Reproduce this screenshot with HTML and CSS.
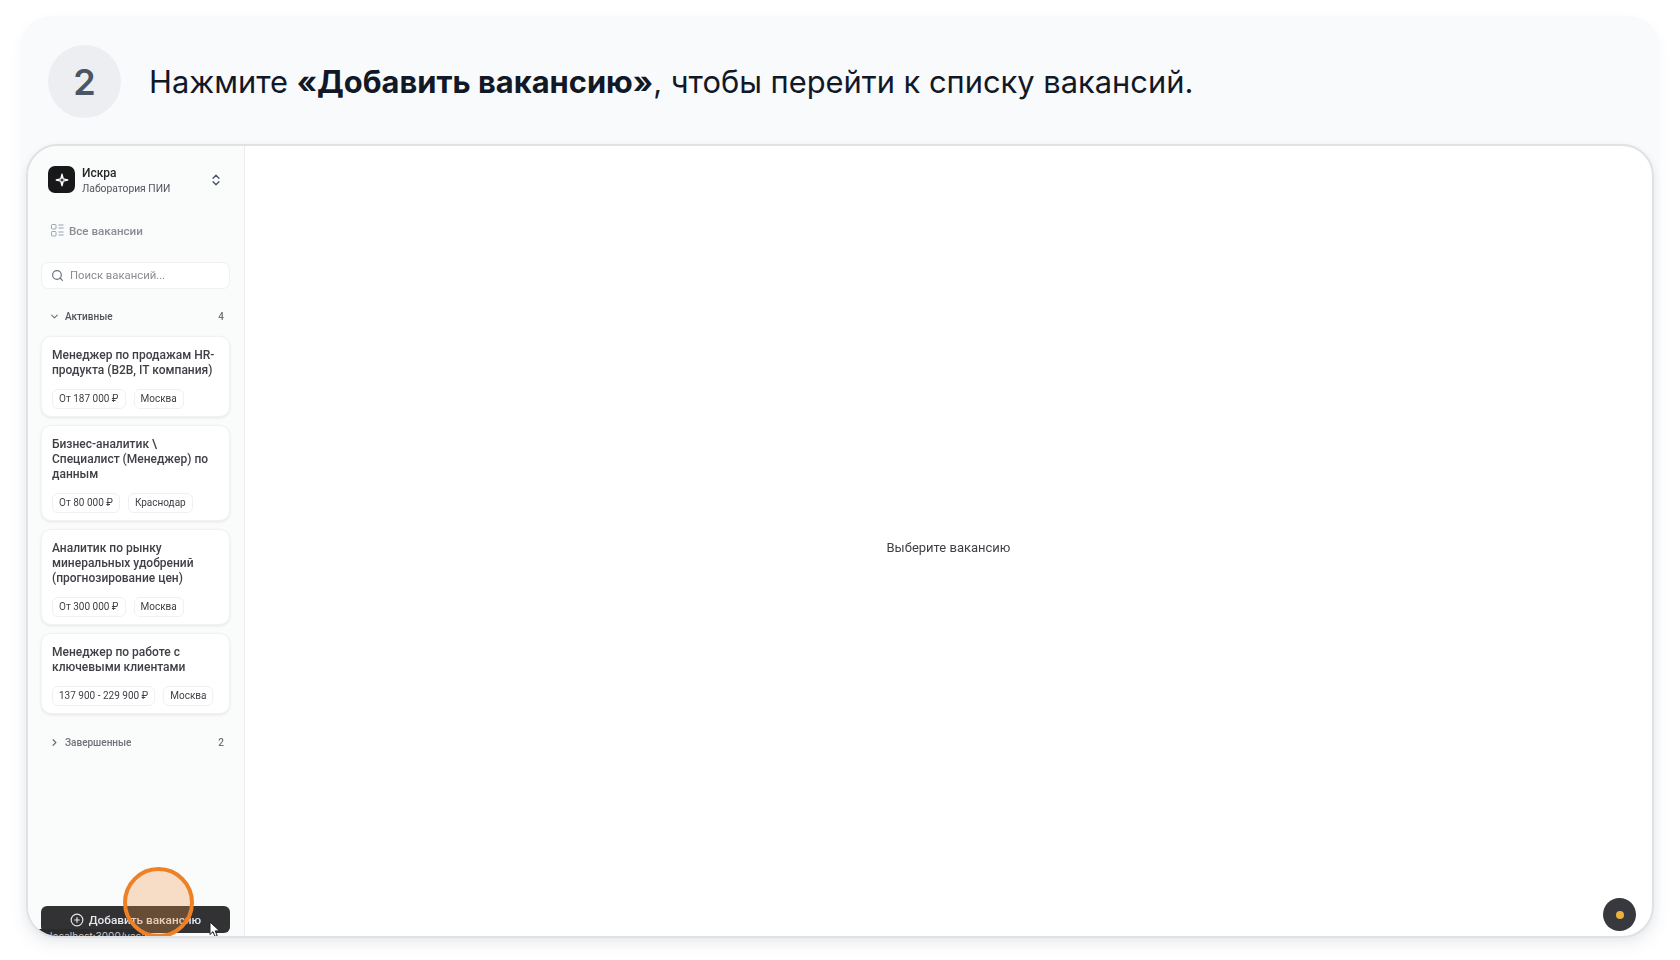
FILE: index.html
```html
<!DOCTYPE html>
<html>
<head>
    <title>Шаг 2</title>
    <link rel="stylesheet" href="styles.css">
</head>
<body>
    <div class="step">
        <div class="step-head">
            <div class="step-num">2</div>
            <h2 class="step-text">Нажмите <b>«Добавить вакансию»</b>, чтобы перейти к списку вакансий.</h2>
        </div>
        <div class="shot">
            <aside class="sidebar">
                <div class="org">
                    <div class="org-logo">
                        <svg width="14" height="14" viewBox="0 0 16 16" fill="none" stroke="#fff" stroke-width="1.7" stroke-linejoin="round"><path d="M8 1.5 9.3 6.7 14.5 8 9.3 9.3 8 14.5 6.7 9.3 1.5 8 6.7 6.7Z"/></svg>
                    </div>
                    <div class="org-info">
                        <div class="org-name">Искра</div>
                        <div class="org-sub">Лаборатория ПИИ</div>
                    </div>
                    <svg class="org-switch" width="14" height="14" viewBox="0 0 24 24" fill="none" stroke="#4b5563" stroke-width="2.4" stroke-linecap="round" stroke-linejoin="round"><path d="m7 15 5 5 5-5"/><path d="m7 9 5-5 5 5"/></svg>
                </div>
                <div class="nav-all">
                    <svg width="13" height="13" viewBox="0 0 13 13" fill="none" stroke="#9ca3af" stroke-width="1"><rect x=".5" y=".5" width="4.5" height="4.5" rx=".8"/><rect x=".5" y="7.5" width="4.5" height="4.5" rx=".8"/><path d="M7.5 1h5M7.5 4h5M7.5 8h5M7.5 11h5"/></svg>
                    <span>Все вакансии</span>
                </div>
                <div class="search">
                    <svg width="13" height="13" viewBox="0 0 24 24" fill="none" stroke="#6b7280" stroke-width="2.2" stroke-linecap="round"><circle cx="11" cy="11" r="8"/><path d="m21 21-4.3-4.3"/></svg>
                    <span>Поиск вакансий...</span>
                </div>
                <div class="group">
                    <svg width="11" height="11" viewBox="0 0 24 24" fill="none" stroke="#6b7280" stroke-width="2.6" stroke-linecap="round" stroke-linejoin="round"><path d="m6 9 6 6 6-6"/></svg>
                    <span class="group-name">Активные</span>
                    <span class="group-count">4</span>
                </div>
                <div class="cards">
                    <div class="card">
                        <div class="card-title">Менеджер по продажам HR-продукта (B2B, IT компания)</div>
                        <div class="tags"><span class="tag">От 187 000 ₽</span><span class="tag">Москва</span></div>
                    </div>
                    <div class="card">
                        <div class="card-title">Бизнес-аналитик \ Специалист (Менеджер) по данным</div>
                        <div class="tags"><span class="tag">От 80 000 ₽</span><span class="tag">Краснодар</span></div>
                    </div>
                    <div class="card">
                        <div class="card-title">Аналитик по рынку минеральных удобрений (прогнозирование цен)</div>
                        <div class="tags"><span class="tag">От 300 000 ₽</span><span class="tag">Москва</span></div>
                    </div>
                    <div class="card">
                        <div class="card-title">Менеджер по работе с ключевыми клиентами</div>
                        <div class="tags"><span class="tag">137 900 - 229 900 ₽</span><span class="tag">Москва</span></div>
                    </div>
                </div>
                <div class="group group-done">
                    <svg width="11" height="11" viewBox="0 0 24 24" fill="none" stroke="#6b7280" stroke-width="2.6" stroke-linecap="round" stroke-linejoin="round"><path d="m9 6 6 6-6 6"/></svg>
                    <span class="group-name">Завершенные</span>
                    <span class="group-count">2</span>
                </div>
                <div class="add-btn">
                    <svg width="14" height="14" viewBox="0 0 24 24" fill="none" stroke="#e5e7eb" stroke-width="2" stroke-linecap="round"><circle cx="12" cy="12" r="10"/><path d="M8 12h8M12 8v8"/></svg>
                    <span>Добавить вакансию</span>
                </div>
            </aside>
            <main class="empty">Выберите вакансию</main>

            <div class="status-bar">localhost:3000/vacancies/add</div>
            <div class="highlight"></div>
            <svg class="cursor" width="12" height="17" viewBox="0 0 12 17"><path d="M1 1v12.5l3-2.8 2 4.8 2.2-1-2-4.6h4.3Z" fill="#fff" stroke="#222" stroke-width="1"/></svg>
            <div class="rec-dot"><span></span></div>
        </div>
    </div>
</body>
</html>
```

FILE: styles.css
```css
html, body {
    margin: 0;
    background-color: #fff;
}
body {
    height: 960px;
    overflow: hidden;
    font-family: Inter, "Noto Sans", sans-serif;
}
.step {
    margin: 16px 20px 0;
    height: 929px;
    padding: 29px 6px 7px;
    box-sizing: border-box;
    display: flex;
    flex-direction: column;
    background-color: #f9fafb;
    border-radius: 32px;
    box-shadow: 0 4px 14px rgba(17, 24, 39, 0.03);
}
.step-head {
    display: flex;
    align-items: center;
    gap: 28px;
    padding-left: 22px;
    height: 73px;
    margin-bottom: 26px;
    flex-shrink: 0;
}
.step-num {
    width: 73px;
    height: 73px;
    border-radius: 50%;
    background-color: #eceef1;
    color: #4b5563;
    font-size: 36px;
    font-weight: 600;
    display: flex;
    align-items: center;
    justify-content: center;
}
.step-text {
    margin: 0;
    font-size: 30.85px;
    font-weight: 400;
    color: #111827;
}
.step-text b {
    font-weight: 700;
}

/* screenshot inside the step */
.shot {
    position: relative;
    flex: 1;
    display: flex;
    overflow: hidden;
    background-color: #fff;
    border: 2px solid #dfe1e5;
    border-radius: 32px;
    box-shadow: 0 3px 8px rgba(17, 24, 39, 0.08);
}
.sidebar {
    width: 217px;
    flex-shrink: 0;
    box-sizing: border-box;
    padding: 20px 14px 3px 13px;
    display: flex;
    flex-direction: column;
    background-color: #fafbfb;
    border-right: 1px solid #ececee;
    font-family: Roboto, sans-serif;
    filter: blur(0.4px);
}
.org {
    display: flex;
    align-items: center;
    padding-left: 7px;
    height: 27px;
}
.org-logo {
    width: 27px;
    height: 27px;
    border-radius: 7px;
    background-color: #18181b;
    display: flex;
    align-items: center;
    justify-content: center;
    flex-shrink: 0;
}
.org-info {
    margin-left: 7px;
    padding-top: 2px;
    flex: 1;
}
.org-name {
    font-size: 12px;
    font-weight: 500;
    line-height: 15px;
    color: #27272a;
}
.org-sub {
    margin-top: 1px;
    font-size: 10.3px;
    line-height: 14px;
    color: #52525b;
}
.org-switch {
    margin-right: 7px;
}
.nav-all {
    display: flex;
    align-items: center;
    gap: 5px;
    margin-top: 24px;
    padding-left: 10px;
    height: 27px;
    font-size: 11.6px;
    font-weight: 500;
    color: #8b8b93;
}
.search {
    display: flex;
    align-items: center;
    gap: 6px;
    margin-top: 18px;
    height: 27px;
    padding-left: 9px;
    box-sizing: border-box;
    background-color: #fff;
    border: 1px solid #f0f0f1;
    border-radius: 7px;
    font-size: 11.3px;
    color: #8b8b93;
}
.group {
    display: flex;
    align-items: center;
    gap: 5px;
    margin-top: 15px;
    padding: 0 6px 0 8px;
    height: 24px;
    font-size: 10px;
    font-weight: 500;
    color: #52525b;
}
.group-count {
    margin-left: auto;
    color: #71717a;
}
.group-done {
    margin-top: 16px;
    color: #71717a;
}
.cards {
    display: flex;
    flex-direction: column;
    gap: 8px;
    margin-top: 8px;
}
.card {
    padding: 11px 10px 7px 10px;
    background-color: #fff;
    border: 1px solid #f2f2f3;
    border-radius: 10px;
    box-shadow: 0 1px 3px rgba(0, 0, 0, 0.09);
}
.card-title {
    font-size: 12px;
    font-weight: 500;
    line-height: 15px;
    color: #3f3f46;
}
.tags {
    display: flex;
    gap: 8px;
    margin-top: 11px;
}
.tag {
    height: 18px;
    line-height: 18px;
    padding: 0 6px;
    background-color: #fff;
    border: 1px solid #f0f0f1;
    border-radius: 6px;
    font-size: 10px;
    color: #3f3f46;
    white-space: nowrap;
}
.add-btn {
    margin-top: auto;
    height: 27px;
    flex-shrink: 0;
    display: flex;
    align-items: center;
    justify-content: center;
    gap: 5px;
    background-color: #323234;
    border-radius: 6px;
    font-size: 11.8px;
    font-weight: 500;
    color: #e5e7eb;
}
.empty {
    flex: 1;
    display: flex;
    align-items: center;
    justify-content: center;
    padding-top: 12px;
    font-size: 13px;
    color: #3f3f46;
    font-family: Roboto, sans-serif;
    filter: blur(0.3px);
}

/* things on top of the screenshot */
.status-bar {
    position: absolute;
    left: 0;
    bottom: -9px;
    width: 117px;
    height: 16px;
    padding-left: 22px;
    box-sizing: border-box;
    background-color: #2b2b2d;
    border-top-right-radius: 3px;
    font-size: 10px;
    line-height: 14px;
    color: #c8c8cc;
    white-space: nowrap;
    overflow: hidden;
}
.highlight {
    position: absolute;
    left: 95px;
    top: 721px;
    width: 71px;
    height: 71px;
    box-sizing: border-box;
    border: 4px solid #ee8026;
    border-radius: 50%;
    background-color: rgba(240, 145, 60, 0.28);
}
.cursor {
    position: absolute;
    left: 181px;
    top: 775px;
}
.rec-dot {
    position: absolute;
    right: 16px;
    bottom: 5px;
    width: 33px;
    height: 33px;
    border-radius: 50%;
    background-color: #38393e;
    display: flex;
    align-items: center;
    justify-content: center;
}
.rec-dot span {
    width: 8px;
    height: 8px;
    border-radius: 50%;
    background-color: #eeb03c;
}
```
